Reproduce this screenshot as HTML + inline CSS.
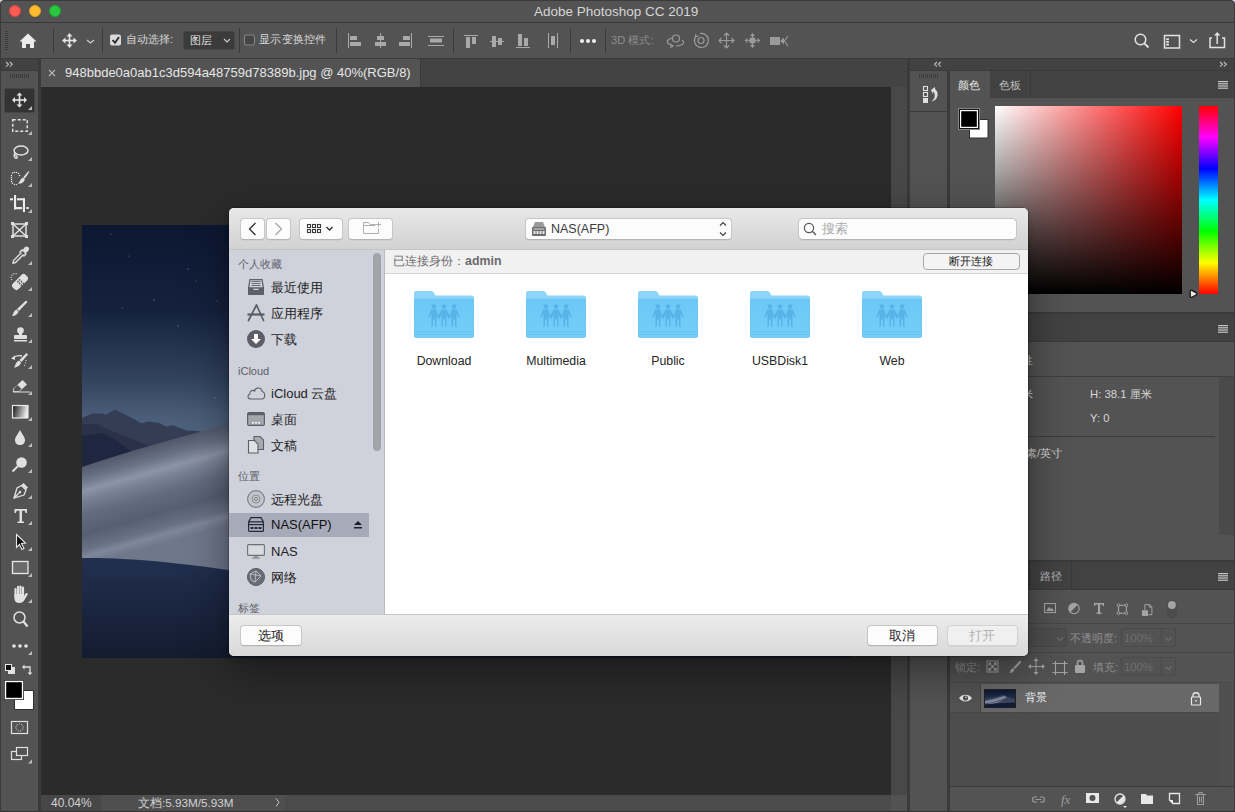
<!DOCTYPE html>
<html><head><meta charset="utf-8">
<style>
*{box-sizing:border-box}
html,body{margin:0;padding:0}
body{width:1235px;height:812px;overflow:hidden;position:relative;background:#2b2b2b;font-family:"Liberation Sans",sans-serif;}
.a{position:absolute}
.t{position:absolute;white-space:nowrap;line-height:1}
svg{position:absolute;overflow:visible}
.btn{background:#fcfcfc;border:1px solid #c6c6c6;border-bottom-color:#b4b4b4;border-radius:4px;box-shadow:0 0.5px 0.5px rgba(0,0,0,0.08)}
.sh{font-size:11px;color:#5d5e66}
.si{font-size:13px;color:#1e1e1e}
</style></head><body>

<!-- TITLE BAR -->
<div class="a" style="left:0;top:0;width:6px;height:6px;background:#d4d6ea"></div>
<div class="a" style="left:1229px;top:0;width:6px;height:6px;background:#d4d6ea"></div>
<div class="a" style="left:0;top:0;width:1235px;height:23px;background:#535353;border:1px solid #3a3a3a;border-bottom-color:#383838;border-radius:4.5px 4.5px 0 0"></div>
<div class="a" style="left:9px;top:5px;width:12px;height:12px;border-radius:50%;background:#fd5a52;border:0.5px solid #e0443e"></div>
<div class="a" style="left:29px;top:5px;width:12px;height:12px;border-radius:50%;background:#febc2e;border:0.5px solid #dea123"></div>
<div class="a" style="left:49px;top:5px;width:12px;height:12px;border-radius:50%;background:#28c840;border:0.5px solid #1aab29"></div>
<div class="t" style="left:534px;top:5px;font-size:13.5px;color:#d6d6d6">Adobe Photoshop CC 2019</div>

<!-- OPTIONS BAR -->
<div class="a" style="left:0;top:23px;width:1235px;height:36px;background:#535353;border-bottom:1px solid #3a3a3a"></div>


<!-- options content -->
<svg style="left:0;top:0" width="1235" height="60">
 <g fill="#3c3c3c">
  <rect x="5" y="31" width="3" height="1"/><rect x="5" y="33" width="3" height="1"/><rect x="5" y="35" width="3" height="1"/><rect x="5" y="37" width="3" height="1"/><rect x="5" y="39" width="3" height="1"/><rect x="5" y="41" width="3" height="1"/><rect x="5" y="43" width="3" height="1"/><rect x="5" y="45" width="3" height="1"/><rect x="5" y="47" width="3" height="1"/><rect x="5" y="49" width="3" height="1"/>
 </g>
 <!-- home -->
 <path d="M28 33.5 L36.5 41.5 L34 41.5 L34 48 L30 48 L30 44 L26 44 L26 48 L22 48 L22 41.5 L19.5 41.5 Z" fill="#ececec"/>
 <g fill="#3a3a3a"><rect x="53" y="28" width="1" height="25"/><rect x="102" y="28" width="1" height="25"/><rect x="239" y="28" width="1" height="25"/><rect x="336" y="28" width="1" height="25"/><rect x="453" y="28" width="1" height="25"/><rect x="570" y="28" width="1" height="25"/><rect x="605" y="28" width="1" height="25"/></g>
 <!-- move -->
 <g fill="#e6e6e6">
  <rect x="68.7" y="35" width="1.6" height="11"/><rect x="64" y="39.7" width="11" height="1.6"/>
  <path d="M69.5 33 L72.5 36.5 L66.5 36.5Z M69.5 48 L72.5 44.5 L66.5 44.5Z M62 40.5 L65.5 37.5 L65.5 43.5Z M77 40.5 L73.5 37.5 L73.5 43.5Z"/>
 </g>
 <path d="M87 40 L90.5 43 L94 40" fill="none" stroke="#cfcfcf" stroke-width="1.2"/>
 <!-- checkbox 1 -->
 <rect x="110" y="34.5" width="11" height="11" rx="2" fill="#dadada"/>
 <path d="M112.5 40 L115 42.7 L119 37" fill="none" stroke="#2a2a2a" stroke-width="1.8"/>
 <!-- dropdown -->
 <rect x="183.5" y="31.5" width="51" height="18" rx="2" fill="#3b3b3b" stroke="#474747"/>
 <path d="M224 39 L227 42 L230 39" fill="none" stroke="#cfcfcf" stroke-width="1.1"/>
 <!-- checkbox 2 -->
 <rect x="244.5" y="35" width="10" height="10" rx="2" fill="#454545" stroke="#8a8a8a" stroke-width="1"/>
 <!-- align icons -->
 <g fill="#a9a9a9">
  <rect x="348" y="33" width="1" height="15"/><rect x="350" y="36" width="7" height="4"/><rect x="350" y="42" width="11" height="4"/>
  <rect x="380" y="33" width="1" height="15"/><rect x="377" y="36" width="7" height="4"/><rect x="375" y="42" width="11" height="4"/>
  <rect x="411" y="33" width="1" height="15"/><rect x="403" y="36" width="7" height="4"/><rect x="399" y="42" width="11" height="4"/>
  <rect x="428" y="36" width="16" height="1"/><rect x="430" y="38.5" width="12" height="4"/><rect x="428" y="45" width="16" height="1"/>
  <rect x="464" y="35" width="14" height="1"/><rect x="466" y="37" width="4" height="11"/><rect x="472" y="37" width="4" height="7"/>
  <rect x="490" y="41" width="14" height="1"/><rect x="492" y="36" width="4" height="11"/><rect x="498" y="38" width="4" height="7"/>
  <rect x="516" y="47" width="14" height="1"/><rect x="518" y="34" width="4" height="12"/><rect x="524" y="38" width="4" height="8"/>
  <rect x="548" y="33" width="1" height="15"/><rect x="551" y="36" width="4" height="9"/><rect x="557" y="33" width="1" height="15"/>
 </g>
 <!-- dots -->
 <g fill="#f0f0f0"><circle cx="582" cy="41" r="2"/><circle cx="588" cy="41" r="2"/><circle cx="594" cy="41" r="2"/></g>
 <!-- 3D icons -->
 <g fill="none" stroke="#9a9a9a" stroke-width="1.2">
  <circle cx="676" cy="38.5" r="3.5"/><path d="M672.5 38 C667 39 666 42 669 44 L673 46 M676 46 C682 46 686 43 682 40"/><path d="M670 44 L673 46 L670 47.5" />
  <circle cx="701" cy="40.5" r="3"/><path d="M696 36 A7 7 0 1 0 700 33.6"/><path d="M695.5 34 L696 36.5 L698.5 36"/>
  <path d="M726.5 33 L726.5 48 M719 40.5 L734 40.5 M724 35.5 L726.5 33 L729 35.5 M724 45.5 L726.5 48 L729 45.5 M721.5 38 L719 40.5 L721.5 43 M731.5 38 L734 40.5 L731.5 43"/>
 </g>
 <g fill="#9a9a9a">
  <circle cx="752.5" cy="40.5" r="3.2"/><path d="M752.5 33 L755 36 L750 36Z M752.5 48 L755 45 L750 45Z M744.5 40.5 L747.5 38 L747.5 43Z M760.5 40.5 L757.5 38 L757.5 43Z"/>
  <rect x="748" y="40" width="9" height="1"/><rect x="752" y="36" width="1" height="9"/>
  <rect x="770" y="37" width="10" height="8"/><path d="M780 41 L784 37.5 L784 44.5Z"/>
 </g>
 <path d="M788 36 L784.5 41 L788 46" fill="none" stroke="#9a9a9a" stroke-width="1.1"/>
 <!-- right icons -->
 <g fill="none" stroke="#e2e2e2" stroke-width="1.5">
  <circle cx="1140.5" cy="39.5" r="5.3"/><path d="M1144.5 43.5 L1148.5 47.5" stroke-width="1.8"/>
  <rect x="1164.5" y="35.5" width="15" height="12.5"/>
  <path d="M1190 39.5 L1193.5 42.5 L1197 39.5" stroke-width="1.1"/>
  <path d="M1212 38 L1210 38 L1210 47.5 L1224.5 47.5 L1224.5 38 L1222 38"/><path d="M1217.2 44 L1217.2 34"/>
 </g>
 <g fill="#e2e2e2"><rect x="1166.2" y="38.3" width="2.7" height="1.8"/><rect x="1166.2" y="41" width="2.7" height="1.8"/><rect x="1166.2" y="43.7" width="2.7" height="1.8"/><path d="M1217.2 32 L1220.5 35.5 L1214 35.5Z"/></g>
</svg>
<div class="t" style="left:126px;top:34px;font-size:11.2px;color:#d8d8d8">自动选择:</div>
<div class="t" style="left:190px;top:35px;font-size:11.2px;color:#e0e0e0">图层</div>
<div class="t" style="left:259px;top:34px;font-size:11.2px;letter-spacing:0.3px;color:#d8d8d8">显示变换控件</div>
<div class="t" style="left:611px;top:35px;font-size:11.2px;color:#8c8c8c">3D 模式:</div>

<!-- LEFT TOOLBAR -->
<div class="a" style="left:0;top:23px;width:1px;height:789px;background:#3a3a3a;z-index:5"></div>
<div class="a" style="left:1234px;top:23px;width:1px;height:789px;background:#3a3a3a;z-index:5"></div>
<div class="a" style="left:0;top:59px;width:38px;height:12px;background:#424242;border-bottom:1px solid #3a3a3a"></div>
<div class="a" style="left:0;top:71px;width:38px;height:741px;background:#535353;border-left:1px solid #3f3f3f"></div>
<div class="a" style="left:38px;top:59px;width:3px;height:753px;background:#3a3a3a"></div>

<!-- DOC TAB BAR -->
<div class="a" style="left:41px;top:59px;width:866px;height:28px;background:#434343"></div>
<div class="a" style="left:41px;top:59px;width:380px;height:28px;background:#535353;border-right:1px solid #3a3a3a"></div>


<!-- toolbar content -->



<svg style="left:0;top:0" width="40" height="812">
 <g fill="#3a3a3a"><rect x="10" y="74" width="1" height="4"/><rect x="12" y="74" width="1" height="4"/><rect x="14" y="74" width="1" height="4"/><rect x="16" y="74" width="1" height="4"/><rect x="18" y="74" width="1" height="4"/><rect x="20" y="74" width="1" height="4"/><rect x="22" y="74" width="1" height="4"/><rect x="24" y="74" width="1" height="4"/><rect x="26" y="74" width="1" height="4"/><rect x="28" y="74" width="1" height="4"/></g>
 <rect x="4.5" y="88.5" width="30" height="24" rx="2" fill="#333333" stroke="#454545"/>
 <g fill="#e4e4e4">
  <rect x="18.7" y="94" width="1.6" height="12"/><rect x="13.5" y="99.2" width="12" height="1.6"/>
  <path d="M19.5 92.5 L22.5 95.5 L16.5 95.5Z M19.5 107.5 L22.5 104.5 L16.5 104.5Z M12 100 L15 97 L15 103Z M27 100 L24 97 L24 103Z"/>
 </g>
 <g fill="#bdbdbd">
  <path d="M32 106 L32 110 L28 110Z"/><path d="M32 131 L32 135 L28 135Z"/><path d="M32 157 L32 161 L28 161Z"/><path d="M32 183 L32 187 L28 187Z"/><path d="M32 209 L32 213 L28 213Z"/>
  <path d="M32 261 L32 265 L28 265Z"/><path d="M32 287 L32 291 L28 291Z"/><path d="M32 313 L32 317 L28 317Z"/><path d="M32 339 L32 343 L28 343Z"/><path d="M32 365 L32 369 L28 369Z"/><path d="M32 391 L32 395 L28 395Z"/><path d="M32 417 L32 421 L28 421Z"/><path d="M32 443 L32 447 L28 447Z"/><path d="M32 469 L32 473 L28 473Z"/><path d="M32 495 L32 499 L28 499Z"/><path d="M32 521 L32 525 L28 525Z"/><path d="M32 547 L32 551 L28 551Z"/><path d="M32 573 L32 577 L28 577Z"/><path d="M32 599 L32 603 L28 603Z"/><path d="M32 651 L32 655 L28 655Z"/><path d="M32 759.5 L32 763.5 L28 763.5Z"/>
 </g>
 <g fill="none" stroke="#e0e0e0" stroke-width="1.5">
  <rect x="12.75" y="119.75" width="14.5" height="11.5" stroke-dasharray="3 2"/>
  <ellipse cx="21" cy="150.5" rx="7" ry="4.5"/><path d="M15 153 C13 156 15 159 17 158 C18 157 16 155 15 155"/>
  
  
  <rect x="13" y="224" width="13" height="12"/><path d="M13 224 L26 236 M26 224 L13 236"/>
 </g>
 <g fill="#e0e0e0">
  <g fill="#f0f0f0"><circle cx="12.5" cy="173" r="0.7"/><circle cx="14.4" cy="172.4" r="0.7"/><circle cx="16.4" cy="172.4" r="0.7"/><circle cx="18.4" cy="173.4" r="0.7"/><circle cx="19.5" cy="175.5" r="0.7"/><circle cx="11.5" cy="175.5" r="0.7"/><circle cx="11.5" cy="177.5" r="0.7"/><circle cx="11.5" cy="179.5" r="0.7"/><circle cx="11.5" cy="181.5" r="0.7"/><circle cx="12.5" cy="183.2" r="0.7"/><circle cx="14.4" cy="184.6" r="0.7"/><circle cx="16.4" cy="184.6" r="0.7"/></g>
  <path d="M28.5 171 L29.2 172 L25 178.5 L23.2 177.3 Z M22.8 177.6 L24.8 178.9 C24.5 182 21.5 183.8 18 183.8 C19.5 182.5 20 179 22.8 177.6 Z" fill="#e0e0e0"/>
  <g fill="#eeeeee"><rect x="10" y="198.3" width="3" height="2"/><rect x="14" y="195" width="2.1" height="14.4"/><rect x="14" y="207" width="8" height="2.2"/><rect x="22.9" y="198.3" width="2.1" height="13.8"/><rect x="17" y="198.3" width="8" height="2"/><rect x="26.3" y="207" width="2.4" height="2"/></g>
  <rect x="11" y="222" width="3" height="3"/><rect x="25" y="222" width="3" height="3"/><rect x="11" y="235" width="3" height="3"/><rect x="25" y="235" width="3" height="3"/>
 </g>
 <!-- eyedropper -->
 <path d="M25 248 C27 246 29 248 28 250 L25 253 L26 254 L24 256 L23 255 L15.5 262.5 L13 263 L13.5 260.5 L21 253 L20 252 L22 250 L23 251 Z" fill="none" stroke="#e0e0e0" stroke-width="1.4"/>
 <path d="M25 248 C27 246 29 248 28 250 L25 253 L23 251 Z" fill="#e0e0e0"/>
 <!-- healing -->
 <g transform="rotate(-45 20 282)"><rect x="11" y="278" width="18" height="8" rx="3" fill="#e0e0e0"/><g fill="#535353"><rect x="18" y="279.5" width="1.5" height="1.5"/><rect x="20.5" y="279.5" width="1.5" height="1.5"/><rect x="18" y="282" width="1.5" height="1.5"/><rect x="20.5" y="282" width="1.5" height="1.5"/><rect x="18" y="284.5" width="1.5" height="1.5"/><rect x="20.5" y="284.5" width="1.5" height="1.5"/></g></g>
 <path d="M12 280 A4 4 0 0 1 17 274" fill="none" stroke="#e0e0e0" stroke-width="1.2" stroke-dasharray="1 1.3"/>
 <!-- brush -->
 <path d="M26 300.5 L27.5 302 L19 311 L17 309 Z M16.5 309.5 L18.5 311.5 C18 314 15 316 12 316 C13.5 314.5 13 311 16.5 309.5Z" fill="#e0e0e0"/>
 <!-- stamp -->
 <g fill="#e0e0e0"><circle cx="20.5" cy="330.5" r="3.3"/><rect x="19" y="332" width="3" height="3.5"/><rect x="14" y="335" width="13" height="4" rx="1"/><rect x="14" y="340" width="13" height="1.5"/></g>
 <!-- history brush -->
 <path d="M26.5 353 L28 354.5 L21.5 362 L19.5 360 Z M19 360.5 L21 362.5 C20.5 365 17.5 367.5 14 367.5 C15.5 366 15.5 362 19 360.5Z" fill="#e0e0e0"/>
 <path d="M22 356 C18 355 15 356 13 358" fill="none" stroke="#e0e0e0" stroke-width="1.4"/><path d="M11 358.5 L15 355.5 L15 360Z" fill="#e0e0e0"/>
 <g fill="#e0e0e0"><rect x="25.5" y="360" width="1" height="1"/><rect x="25" y="362.5" width="1" height="1"/><rect x="24" y="365" width="1" height="1"/></g>
 <!-- eraser -->
 <path d="M22.5 380 L27 384.5 L19 392 L13 392 L13 389 Z" fill="#e0e0e0"/><path d="M17.5 385 L21.5 389 L19 391.2 L14 391.2 L13.8 389 Z" fill="#535353"/><rect x="13" y="391.5" width="17" height="1" fill="#e0e0e0"/>
 <!-- gradient -->
 <defs><linearGradient id="gr" x1="0" y1="0" x2="1" y2="0.2"><stop offset="0" stop-color="#111"/><stop offset="1" stop-color="#eee"/></linearGradient></defs>
 <rect x="12.5" y="405.5" width="15.5" height="12.5" fill="url(#gr)" stroke="#e8e8e8" stroke-width="1.2"/>
 <!-- drop -->
 <path d="M20 430 C22 434 25 437 25 440 C25 443 23 445 20 445 C17 445 15 443 15 440 C15 437 18 434 20 430Z" fill="#e0e0e0"/>
 <!-- dodge -->
 <circle cx="21.5" cy="462.5" r="5.3" fill="#e0e0e0"/><path d="M18 466 L12.5 471.5" stroke="#e0e0e0" stroke-width="2" fill="none"/>
 <!-- pen -->
 <path d="M23.5 483 L28 487.5 L26 489.5 L21.5 485 Z" fill="#e0e0e0"/>
 <path d="M21.5 485.5 L26 490 L24 495 L14 498 L17 488 Z M14 498 L19.5 492.5" fill="none" stroke="#e0e0e0" stroke-width="1.3"/><circle cx="20" cy="492" r="1.2" fill="#e0e0e0"/>
 <!-- type -->
 <path d="M14.5 509 L27 509 L27 513 L25.5 513 L25 510.7 L22 510.7 L22 521.5 L24 521.5 L24 523 L17.5 523 L17.5 521.5 L19.5 521.5 L19.5 510.7 L16.5 510.7 L16 513 L14.5 513 Z" fill="#e0e0e0"/>
 <!-- path select -->
 <path d="M16.5 534.5 L25.5 543 L21.5 543.5 L24 548.5 L22 549.5 L19.5 544.5 L16.5 547.5 Z" fill="#111" stroke="#e8e8e8" stroke-width="1.1"/>
 <!-- rect -->
 <rect x="12.5" y="561.5" width="15.5" height="12" fill="#6b6b6b" stroke="#e8e8e8" stroke-width="1.3"/>
 <!-- hand -->
 <g fill="#e2e2e2">
  <rect x="14.4" y="588" width="2.2" height="9" rx="1.1"/>
  <rect x="16.9" y="585.8" width="2.2" height="9" rx="1.1"/>
  <rect x="19.4" y="585.4" width="2.2" height="9" rx="1.1"/>
  <rect x="21.9" y="586.6" width="2.2" height="9" rx="1.1"/>
  <path d="M14.4 594 L24.1 594 L24.1 596 L25.6 593.6 C26.4 592.4 28.3 593.2 27.6 594.6 L24 600.8 C23 602.3 21.3 603 19.2 603 C16.2 603 14.4 601 14.4 598.4 Z"/>
 </g>
 <!-- zoom -->
 <circle cx="19.5" cy="617.5" r="5.5" fill="none" stroke="#e0e0e0" stroke-width="1.5"/><path d="M23.5 621.5 L27.5 626.5" stroke="#e0e0e0" stroke-width="2.2"/>
 <!-- dots -->
 <g fill="#e6e6e6"><circle cx="14" cy="646" r="1.8"/><circle cx="20" cy="646" r="1.8"/><circle cx="26" cy="646" r="1.8"/></g>
 <!-- default colors -->
 <rect x="8" y="667" width="7" height="7" fill="#e0e0e0"/><rect x="5.5" y="664.5" width="6" height="6" fill="#111" stroke="#e8e8e8"/>
 <path d="M23 667 L30 667 L30 673" fill="none" stroke="#e0e0e0" stroke-width="1.3"/><path d="M22 667 L24.5 664.5 L24.5 669.5Z M30 675 L27.5 672.5 L32.5 672.5Z" fill="#e0e0e0"/>
 <!-- swatches -->
 <rect x="14.5" y="690.5" width="19" height="19" fill="#fff" stroke="#333"/>
 <rect x="4.5" y="680.5" width="19" height="19" fill="#000" stroke="#2d2d2d"/><rect x="5.5" y="681.5" width="17" height="17" fill="none" stroke="#fff" stroke-width="1.4"/>
 <!-- quick mask -->
 <rect x="11.5" y="721.5" width="16" height="12" fill="none" stroke="#e0e0e0" stroke-width="1.2"/><circle cx="19.5" cy="727.5" r="3.6" fill="none" stroke="#e0e0e0" stroke-width="1" stroke-dasharray="1 1"/>
 <!-- screen mode -->
 <rect x="11.5" y="751.5" width="10" height="8" fill="#535353" stroke="#e0e0e0" stroke-width="1.2"/><rect x="16.5" y="747.5" width="11" height="8" fill="#535353" stroke="#e0e0e0" stroke-width="1.2"/>
</svg>

<!-- doc tab text -->
<svg style="left:0;top:0" width="60" height="90"><path d="M49 70 L55 76 M55 70 L49 76" stroke="#b8b8b8" stroke-width="1.1"/></svg>
<div class="t" style="left:65px;top:66px;font-size:13px;color:#e6e6e6">948bbde0a0ab1c3d594a48759d78389b.jpg @ 40%(RGB/8)</div>

<!-- CANVAS -->
<div class="a" style="left:41px;top:87px;width:850px;height:708px;background:#2b2b2b"></div>

<!-- CANVAS IMAGE -->
<svg style="left:82px;top:225px" width="769" height="433">
 <defs>
  <linearGradient id="sky" x1="0" y1="0" x2="0" y2="1"><stop offset="0" stop-color="#0c1731"/><stop offset="0.2" stop-color="#15223e"/><stop offset="0.36" stop-color="#33445f"/><stop offset="0.44" stop-color="#4a5d78"/><stop offset="0.5" stop-color="#536681"/><stop offset="1" stop-color="#536681"/></linearGradient>
  <linearGradient id="dune1" gradientUnits="userSpaceOnUse" x1="0" y1="242" x2="26" y2="334">
   <stop offset="0" stop-color="#545b6f"/><stop offset="0.12" stop-color="#687084"/><stop offset="0.25" stop-color="#8c94a7"/><stop offset="0.33" stop-color="#7a8296"/><stop offset="0.48" stop-color="#646c80"/><stop offset="0.68" stop-color="#565e72"/><stop offset="0.84" stop-color="#697185"/><stop offset="0.91" stop-color="#7f879b"/><stop offset="1" stop-color="#6f778b"/>
  </linearGradient>
  <linearGradient id="dune2" x1="0" y1="0" x2="0" y2="1"><stop offset="0" stop-color="#223050"/><stop offset="1" stop-color="#131b2f"/></linearGradient>
  <linearGradient id="mtn" x1="0" y1="0" x2="0" y2="1"><stop offset="0" stop-color="#3a425a"/><stop offset="1" stop-color="#2a3148"/></linearGradient>
 </defs>
 <rect width="769" height="433" fill="url(#sky)"/>
 <path d="M0 192.8 L10.3 188.5 L20.2 188.5 L23.8 189.7 L33.1 184.5 L41.1 188.5 L50.9 193.4 L59.5 198.3 L65.7 196.5 L76.8 197.7 L84.2 201.4 L90.3 200.2 L96.5 202.6 L105.1 205.7 L113.7 205.7 L121 207 L160 230 L0 260 Z" fill="#353d54"/>
 <path d="M0 199.5 L15 199 L22.6 203 L35 208 L50 214 L70 222 L95 230 L120 236 L0 262 Z" fill="#2a3148"/>
 <path d="M0 211 L20 207.9 L35 216 L50.9 227.6 L60 232 L0 262 Z" fill="#1f2740"/>
 <path d="M0 242 C50 225 100 212 147 199 L769 20 L769 433 L0 433 Z" fill="url(#dune1)"/>
 <path d="M0 333 C40 332 100 338 147 345 C300 360 500 380 769 400 L769 433 L0 433 Z" fill="url(#dune2)"/>
 <g fill="#9aa6c0" opacity="0.6"><circle cx="29" cy="9" r="0.6"/><circle cx="47" cy="31" r="0.6"/><circle cx="106" cy="44" r="0.7"/><circle cx="114" cy="56" r="0.6"/><circle cx="72" cy="75" r="0.7"/><circle cx="40" cy="83" r="0.6"/><circle cx="96" cy="101" r="0.7"/><circle cx="135" cy="76" r="0.6"/><circle cx="133" cy="173" r="0.7"/></g>
</svg>

<div class="a" style="left:891px;top:87px;width:16px;height:708px;background:#484848"></div>
<!-- status bar -->
<div class="a" style="left:41px;top:795px;width:866px;height:16px;background:#4b4b4b"></div>


<div class="a" style="left:41px;top:795px;width:60px;height:16px;background:#474747"></div>
<div class="a" style="left:101px;top:795px;width:184px;height:16px;background:#4f4f4f"></div>
<div class="t" style="left:51px;top:797px;font-size:12px;color:#d2d2d2">40.04%</div>
<div class="t" style="left:138px;top:797px;font-size:11.7px;color:#d2d2d2">文档:5.93M/5.93M</div>
<svg style="left:270px;top:795px" width="16" height="16"><path d="M276 3.5 L279 7.5 L276 11.5" transform="translate(-270 0)" fill="none" stroke="#c8c8c8" stroke-width="1"/></svg>
<div class="a" style="left:891px;top:795px;width:16px;height:16px;background:#525252"></div>

<!-- RIGHT COLUMNS -->
<div class="a" style="left:907px;top:59px;width:3px;height:753px;background:#3a3a3a"></div>
<div class="a" style="left:910px;top:59px;width:325px;height:12px;background:#424242;border-bottom:1px solid #3a3a3a"></div>
<div class="a" style="left:910px;top:71px;width:37px;height:741px;background:#535353"></div>
<div class="a" style="left:910px;top:111px;width:37px;height:1px;background:#3a3a3a"></div>
<div class="a" style="left:947px;top:71px;width:3px;height:741px;background:#3a3a3a"></div>
<div class="a" style="left:950px;top:71px;width:284px;height:741px;background:#535353"></div>
<div class="a" style="left:1234px;top:59px;width:1px;height:753px;background:#333"></div>
<div class="a" style="left:0;top:811px;width:1235px;height:1px;background:#333"></div>



<!-- PANELS -->
<!-- history icon col -->
<svg style="left:909px;top:71px" width="40" height="45">
 <g fill="#3c3c3c" transform="translate(3 0)"><rect x="7" y="3" width="1" height="4"/><rect x="9" y="3" width="1" height="4"/><rect x="11" y="3" width="1" height="4"/><rect x="13" y="3" width="1" height="4"/><rect x="15" y="3" width="1" height="4"/><rect x="17" y="3" width="1" height="4"/><rect x="19" y="3" width="1" height="4"/><rect x="21" y="3" width="1" height="4"/><rect x="23" y="3" width="1" height="4"/><rect x="25" y="3" width="1" height="4"/></g>
 <g fill="none" stroke="#e0e0e0" stroke-width="1.1"><rect x="14.5" y="15.5" width="4" height="4"/><rect x="14.5" y="21.5" width="4" height="4"/></g>
 <rect x="14" y="27" width="5" height="5" fill="#e0e0e0"/>
 <path d="M22 19 L26 16 L26.2 18.5 C29 20 29.5 25 27 28 C25.8 29.3 24 30.2 22.5 30.5 C25 28.5 26.5 25.5 25.5 22.5 C25.2 21.5 24.8 21 24.2 20.5 L24 23 Z" fill="#e0e0e0"/>
</svg>

<!-- color panel -->
<div class="a" style="left:950px;top:71px;width:284px;height:27px;background:#424242"></div>
<div class="a" style="left:950px;top:71px;width:40px;height:27px;background:#535353"></div>
<div class="a" style="left:1030px;top:71px;width:1px;height:27px;background:#393939"></div>
<div class="t" style="left:958px;top:80px;font-size:11.3px;color:#e4e4e4">颜色</div>
<div class="t" style="left:999px;top:80px;font-size:11.3px;color:#bcbcbc">色板</div>
<svg style="left:1217px;top:80px" width="12" height="10"><g fill="#c6c6c6"><rect x="1" y="1" width="10" height="1.2"/><rect x="1" y="3.2" width="10" height="1.2"/><rect x="1" y="5.4" width="10" height="1.2"/><rect x="1" y="7.6" width="10" height="1.2"/></g></svg>
<svg style="left:958px;top:108px" width="32" height="32">
 <rect x="11.5" y="11.5" width="18.5" height="18.5" fill="#fff" stroke="#2e2e2e"/>
 <rect x="0.5" y="0.5" width="21" height="21" fill="#000" stroke="#858585"/>
 <rect x="1.5" y="1.5" width="19" height="19" fill="none" stroke="#111"/>
 <rect x="2.6" y="2.6" width="16.8" height="16.8" fill="none" stroke="#fff" stroke-width="1.2"/>
</svg>
<div class="a" style="left:995px;top:106px;width:187px;height:188px;background:linear-gradient(to bottom,rgba(0,0,0,0),#000),linear-gradient(to right,#fff,#f00)"></div>
<div class="a" style="left:1199px;top:106px;width:19px;height:188px;background:linear-gradient(to bottom,#ff0000 0%,#ff00ff 16.7%,#0000ff 33.3%,#00ffff 50%,#00ff00 66.7%,#ffff00 83.3%,#ff0000 100%)"></div>
<svg style="left:1188px;top:288px" width="12" height="12"><path d="M2.2 3.6 Q2.2 1.6 4 2.4 L8.4 4.9 Q9.6 5.8 8.4 6.7 L4 9.2 Q2.2 10 2.2 8 Z" fill="#e8e8e8" stroke="#151515" stroke-width="1.3" stroke-linejoin="round"/></svg>
<div class="a" style="left:950px;top:312px;width:284px;height:2px;background:#3a3a3a"></div>

<!-- properties panel -->
<div class="a" style="left:950px;top:314px;width:284px;height:28px;background:#424242;border-bottom:1px solid #3b3b3b"></div>
<svg style="left:1217px;top:324px" width="12" height="10"><g fill="#c6c6c6"><rect x="1" y="1" width="10" height="1.2"/><rect x="1" y="3.2" width="10" height="1.2"/><rect x="1" y="5.4" width="10" height="1.2"/><rect x="1" y="7.6" width="10" height="1.2"/></g></svg>
<div class="a" style="left:950px;top:376px;width:284px;height:1px;background:#3f3f3f"></div>
<div class="t" style="left:933px;top:355px;width:100px;text-align:right;font-size:11.3px;color:#cfcfcf">文档属性</div>
<div class="a" style="left:1219px;top:377px;width:15px;height:158px;background:#4a4a4a"></div>
<div class="t" style="left:933px;top:389px;width:100px;text-align:right;font-size:11.3px;color:#d6d6d6">W: 50.8 厘米</div>
<div class="t" style="left:1090px;top:389px;font-size:11.3px;color:#d6d6d6">H: 38.1 厘米</div>
<div class="t" style="left:960px;top:412px;font-size:11.3px;color:#d6d6d6">X: 0</div>
<div class="t" style="left:1090px;top:413px;font-size:11.3px;color:#d6d6d6">Y: 0</div>
<div class="a" style="left:958px;top:436px;width:257px;height:1px;background:#3d3d3d"></div>
<div class="t" style="left:960px;top:448px;font-size:11.3px;color:#d6d6d6">分辨率: 72 像素/英寸</div>
<div class="a" style="left:950px;top:560px;width:284px;height:2px;background:#3a3a3a"></div>

<!-- layers panel -->
<div class="a" style="left:950px;top:562px;width:284px;height:28px;background:#424242;border-bottom:1px solid #3b3b3b"></div>
<div class="a" style="left:950px;top:562px;width:40px;height:29px;background:#535353"></div>
<div class="a" style="left:990px;top:562px;width:1px;height:28px;background:#393939"></div>
<div class="a" style="left:1029px;top:562px;width:1px;height:28px;background:#393939"></div>
<div class="a" style="left:1071px;top:562px;width:1px;height:28px;background:#393939"></div>
<div class="t" style="left:1040px;top:571px;font-size:11.3px;color:#bcbcbc">路径</div>
<svg style="left:1217px;top:572px" width="12" height="10"><g fill="#c6c6c6"><rect x="1" y="1" width="10" height="1.2"/><rect x="1" y="3.2" width="10" height="1.2"/><rect x="1" y="5.4" width="10" height="1.2"/><rect x="1" y="7.6" width="10" height="1.2"/></g></svg>
<div class="a" style="left:950px;top:623px;width:284px;height:1px;background:#474747"></div>
<div class="a" style="left:950px;top:652px;width:284px;height:1px;background:#474747"></div>
<div class="a" style="left:950px;top:682px;width:284px;height:1px;background:#474747"></div>
<svg style="left:950px;top:590px" width="284" height="200">
 <g fill="none" stroke="#a4a4a4" stroke-width="1.1">
  <rect x="94.5" y="13.5" width="11" height="9"/>
  <circle cx="124" cy="18.5" r="5.2"/>
  <rect x="168.5" y="15.3" width="7.9" height="7.9"/>
  <rect x="72.5" y="38.5" width="44" height="18" rx="2" stroke="#4a4a4a" fill="#4f4f4f"/>
  <rect x="171.5" y="38.5" width="54" height="18" rx="2" stroke="#4a4a4a"/><path d="M211.5 38.5 L211.5 56.5" stroke="#4a4a4a"/>
  <rect x="171.5" y="67.5" width="54" height="17.5" rx="2" stroke="#4a4a4a"/><path d="M211.5 67.5 L211.5 85" stroke="#4a4a4a"/>
  <path d="M107 47.5 L110 50.5 L113 47.5 M215.5 47.5 L218.5 50.5 L221.5 47.5 M215.5 76.5 L218.5 79.5 L221.5 76.5" stroke="#6e6e6e"/>
 </g>
 <g fill="#a4a4a4">
  <path d="M96 21 L99 17 L101 19 L102 18 L104 21 Z"/>
  <path d="M124 13.3 A5.2 5.2 0 0 0 124 23.7 Z" transform="rotate(45 124 18.5)"/>
  <path d="M144 13 L154 13 L154 16 L153 16 L152.5 14.5 L150 14.5 L150 22.5 L151.5 22.5 L151.5 24 L146.5 24 L146.5 22.5 L148 22.5 L148 14.5 L145.5 14.5 L145 16 L144 16 Z"/>
  
  <rect x="192" y="20.2" width="6" height="5.8"/>
  <circle cx="221.9" cy="15" r="4"/>
 </g>
 <rect x="217.7" y="10.5" width="8.5" height="17.5" rx="4.25" fill="#4c4c4c" stroke="#484848" stroke-width="0.8"/><circle cx="221.9" cy="15" r="4" fill="#a4a4a4"/>
 <g fill="#535353" stroke="#a4a4a4" stroke-width="1"><circle cx="168.5" cy="15.3" r="1.4"/><circle cx="176.4" cy="15.3" r="1.4"/><circle cx="168.5" cy="23.2" r="1.4"/><circle cx="176.4" cy="23.2" r="1.4"/></g>
 <path d="M194.8 20 L194.8 14.6 L199.5 14.6 L201.9 17 L201.9 24.7 L198.2 24.7 M199.3 14.8 L199.3 17.2 L201.7 17.2" fill="none" stroke="#a4a4a4" stroke-width="1"/>
 <!-- lock row icons -->
 <g fill="#a4a4a4">
  <rect x="37" y="71" width="11" height="11" fill="none" stroke="#a4a4a4"/><rect x="38.5" y="72.5" width="2.7" height="2.7"/><rect x="43.9" y="72.5" width="2.7" height="2.7"/><rect x="41.2" y="75.2" width="2.7" height="2.7"/><rect x="38.5" y="77.9" width="2.7" height="2.7"/><rect x="43.9" y="77.9" width="2.7" height="2.7"/>
  <path d="M70 70.5 L71.5 72 L65 79 L63.5 77.5 Z M63 78 L64.5 79.5 C64 81.5 62 83 59.5 83 C60.5 81.5 60.5 79 63 78 Z"/>
  <rect x="85.5" y="69" width="1" height="15"/><rect x="79" y="76" width="15" height="1"/><path d="M86 68 L88.5 71 L83.5 71Z M86 85 L88.5 82 L83.5 82Z M78 76.5 L81 74 L81 79Z M95 76.5 L92 74 L92 79Z"/>
  <path d="M127.5 75 L127.5 73 C127.5 69.5 132.5 69.5 132.5 73 L132.5 75" fill="none" stroke="#a4a4a4" stroke-width="1.5"/><rect x="125" y="75" width="10" height="8" rx="1"/>
 </g>
 <path d="M105.5 73.5 L114.5 73.5 L114.5 82.5 L105.5 82.5 Z M105.5 71 L105.5 73.5 M102.5 73.5 L105.5 73.5 M105.5 82.5 L105.5 85 M102.5 82.5 L105.5 82.5 M114.5 73.5 L117.5 73.5 M114.5 71 L114.5 73.5 M114.5 82.5 L117.5 82.5 M114.5 82.5 L114.5 85" fill="none" stroke="#a4a4a4" stroke-width="1.1"/>
</svg>
<div class="t" style="left:1070px;top:633px;font-size:11.3px;color:#8f8f8f">不透明度:</div>
<div class="t" style="left:1124px;top:633px;font-size:11.3px;color:#6e6e6e">100%</div>
<div class="t" style="left:955px;top:662px;font-size:11.3px;color:#8f8f8f">锁定:</div>
<div class="t" style="left:1093px;top:662px;font-size:11.3px;color:#8f8f8f">填充:</div>
<div class="t" style="left:1124px;top:662px;font-size:11.3px;color:#6e6e6e">100%</div>
<!-- layer row -->
<div class="a" style="left:981px;top:684px;width:238px;height:28px;background:#686868"></div>
<div class="a" style="left:950px;top:684px;width:31px;height:28px;background:#535353;border-right:1px solid #484848"></div>
<div class="a" style="left:950px;top:712px;width:269px;height:1px;background:#484848"></div>
<div class="a" style="left:950px;top:713px;width:269px;height:73px;background:#4d4d4d"></div>
<div class="a" style="left:1219px;top:684px;width:15px;height:102px;background:#4f4f4f"></div>
<svg style="left:950px;top:684px" width="284" height="30">
 <path d="M9 14 C12 9.5 19 9.5 22 14 C19 18.5 12 18.5 9 14Z" fill="#e8e8e8"/><circle cx="15.5" cy="14" r="2.6" fill="#535353"/><circle cx="16" cy="13.3" r="0.8" fill="#e8e8e8"/>
 <path d="M243 13 L243 11 C243 8 249 8 249 11 L249 13" fill="none" stroke="#e8e8e8" stroke-width="1.3"/><rect x="241.5" y="13" width="9" height="8" rx="0.5" fill="none" stroke="#e8e8e8" stroke-width="1.2"/><rect x="245.3" y="16" width="1.4" height="1.8" fill="#e8e8e8"/>
</svg>
<svg style="left:984px;top:689px" width="32" height="19">
 <defs><linearGradient id="ths" x1="0" y1="0" x2="0" y2="1"><stop offset="0" stop-color="#0b1530"/><stop offset="0.5" stop-color="#24334f"/><stop offset="1" stop-color="#101a30"/></linearGradient></defs>
 <rect x="0.5" y="0.5" width="31" height="18" fill="url(#ths)" stroke="#222" stroke-width="1"/>
 <path d="M1 10 L6 9 L12 8 L17 6.5 L20 6 L24 8 L28 9.5 L31 10.5 L31 17 L1 17Z" fill="#3b4660"/>
 <path d="M1 12 L8 10.5 L14 9 L20 7 L23 8.5 L18 10.5 L10 13 L1 14.5Z" fill="#8d97ad" opacity="0.85"/>
 <path d="M3 15 L10 13.5 L16 12 L20 11 L14 13.5 L6 16Z" fill="#9aa3b8" opacity="0.7"/>
 <path d="M1 15.5 C10 14.5 20 14 31 13.5 L31 18.5 L1 18.5Z" fill="#141d34"/>
</svg>
<div class="t" style="left:1025px;top:692px;font-size:11.3px;color:#f0f0f0">背景</div>
<!-- layers footer -->
<div class="a" style="left:950px;top:786px;width:284px;height:1px;background:#3b3b3b"></div>
<svg style="left:1020px;top:788px" width="200" height="24">
 <g fill="none" stroke="#9c9c9c" stroke-width="1.2"><path d="M17 9 L14.5 9 C12 9 12 14 14.5 14 L17 14 M20 9 L22.5 9 C25 9 25 14 22.5 14 L20 14 M15.5 11.5 L21.5 11.5"/></g>
 <text x="41" y="16" font-family="Liberation Serif" font-style="italic" font-size="13" fill="#9c9c9c">fx</text>
 <rect x="66" y="5" width="13" height="10" fill="#e8e8e8"/><circle cx="72.5" cy="10" r="3" fill="#535353"/>
 <circle cx="100" cy="11" r="5" fill="#535353" stroke="#e8e8e8" stroke-width="1.3"/><path d="M96.5 14.5 L103.5 7.5 A5 5 0 0 1 96.5 14.5Z" fill="#e8e8e8"/><path d="M103 18 L107 18 L105 20Z" fill="#e8e8e8"/>
 <path d="M121 6 L126 6 L127 7.5 L133 7.5 L133 16 L121 16 Z" fill="#e8e8e8"/>
 <path d="M149.5 5.5 L159.5 5.5 L159.5 15.5 L153 15.5 L149.5 12Z" fill="none" stroke="#e8e8e8" stroke-width="1.3"/><path d="M149 12 L153 12 L153 16Z" fill="#e8e8e8"/>
 <g fill="none" stroke="#9c9c9c" stroke-width="1.1"><path d="M175 6.5 L186 6.5 M177.5 6.5 L177.5 16.5 L183.5 16.5 L183.5 6.5 M178.5 6.5 L179 4.5 L182 4.5 L182.5 6.5 M179.5 8.5 L179.5 14.5 M181.5 8.5 L181.5 14.5"/></g>
</svg>

<svg style="left:0;top:0" width="1235" height="75"><g fill="none" stroke="#bdbdbd" stroke-width="1.1">
<path d="M6 62 L8.5 64.3 L6 66.6 M9.8 62 L12.3 64.3 L9.8 66.6"/>
<path d="M937 62 L934.5 64.3 L937 66.6 M940.8 62 L938.3 64.3 L940.8 66.6"/>
<path d="M1220 62 L1222.5 64.3 L1220 66.6 M1223.8 62 L1226.3 64.3 L1223.8 66.6"/>
</g></svg>
<!-- DIALOG -->
<div class="a" style="left:229px;top:208px;width:799px;height:448px;border-radius:5px;box-shadow:0 0 0 0.5px rgba(0,0,0,0.35),0 14px 45px rgba(0,0,0,0.42),0 2px 6px rgba(0,0,0,0.2);overflow:hidden;background:#fff">
 <!-- toolbar -->
 <div class="a" style="left:0;top:0;width:799px;height:42px;background:linear-gradient(#e8e8e8,#d2d2d2);border-bottom:1px solid #c4c4c4"></div>
 <div class="a btn" style="left:11px;top:10px;width:25px;height:22px"></div>
 <div class="a btn" style="left:37px;top:10px;width:25px;height:22px"></div>
 <div class="a btn" style="left:70px;top:10px;width:44px;height:22px"></div>
 <div class="a btn" style="left:119px;top:10px;width:45px;height:22px"></div>
 <div class="a btn" style="left:296px;top:10px;width:207px;height:22px"></div>
 <div class="a btn" style="left:569px;top:10px;width:219px;height:22px;border-radius:5px"></div>
 <svg style="left:0;top:0" width="799" height="42">
  <path d="M26.5 15 L20.5 21 L26.5 27" fill="none" stroke="#333" stroke-width="1.4"/>
  <path d="M46.5 15 L52.5 21 L46.5 27" fill="none" stroke="#a8a8a8" stroke-width="1.4"/>
  <g fill="none" stroke="#3a3a3a" stroke-width="1.1"><rect x="78.5" y="16.5" width="3" height="3"/><rect x="83.5" y="16.5" width="3" height="3"/><rect x="88.5" y="16.5" width="3" height="3"/><rect x="78.5" y="21.5" width="3" height="3"/><rect x="83.5" y="21.5" width="3" height="3"/><rect x="88.5" y="21.5" width="3" height="3"/></g>
  <path d="M97.5 19 L100.5 22 L103.5 19" fill="none" stroke="#333" stroke-width="1.4"/>
  <path d="M134.5 14.5 L139.5 14.5 L141 16.5 L148 16.5 M134.5 14.5 L134.5 25.5 L149.5 25.5 L149.5 20.5 M134.5 17.5 L146 17.5" fill="none" stroke="#b0b0b0" stroke-width="1"/>
  <path d="M149.5 14 L149.5 19 M147 16.5 L152 16.5" stroke="#b0b0b0" stroke-width="1"/>
  <!-- nas icon -->
  <g transform="translate(303,14)"><path d="M3 0 L11 0 L13 5 L1 5Z" fill="#9a9a9a"/><rect x="0" y="5" width="14" height="9" rx="1" fill="#6f6f6f"/><rect x="1.5" y="6.5" width="11" height="1" fill="#d8d8d8"/><g fill="#e8e8e8"><rect x="1.5" y="9" width="2" height="3"/><rect x="4.5" y="9" width="2" height="3"/><rect x="7.5" y="9" width="2" height="3"/><rect x="10.5" y="9" width="2" height="3"/></g></g>
  <path d="M491 17.5 L494 14.5 L497 17.5 M491 24.5 L494 27.5 L497 24.5" fill="none" stroke="#444" stroke-width="1.2"/>
  <circle cx="580" cy="20" r="4.6" fill="none" stroke="#555" stroke-width="1.2"/><path d="M583.3 23.3 L587 27" stroke="#555" stroke-width="1.3"/>
 </svg>
 <div class="t" style="left:322px;top:15px;font-size:12.5px;color:#3a3a3a">NAS(AFP)</div>
 <div class="t" style="left:593px;top:14px;font-size:13px;color:#a8a8a8">搜索</div>

 <!-- sidebar -->
 <div class="a" style="left:0;top:42px;width:156px;height:364px;background:#cfd1db;border-right:1px solid #b9bac0"></div>
 <div class="a" style="left:144px;top:45px;width:8px;height:198px;border-radius:4px;background:#a3a4aa"></div>
 <div class="a" style="left:0;top:305px;width:140px;height:24px;background:#a7aab8"></div>
 <div class="t sh" style="left:9px;top:51px">个人收藏</div>
 <div class="t si" style="left:42px;top:73px">最近使用</div>
 <div class="t si" style="left:42px;top:99px">应用程序</div>
 <div class="t si" style="left:42px;top:125px">下载</div>
 <div class="t sh" style="left:9px;top:158px">iCloud</div>
 <div class="t si" style="left:42px;top:179px">iCloud 云盘</div>
 <div class="t si" style="left:42px;top:205px">桌面</div>
 <div class="t si" style="left:42px;top:231px">文稿</div>
 <div class="t sh" style="left:9px;top:263px">位置</div>
 <div class="t si" style="left:42px;top:285px">远程光盘</div>
 <div class="t si" style="left:42px;top:310px;color:#111">NAS(AFP)</div>
 <div class="t si" style="left:42px;top:337px">NAS</div>
 <div class="t si" style="left:42px;top:363px">网络</div>
 <div class="t sh" style="left:9px;top:395px">标签</div>
 <svg style="left:0;top:42px" width="156" height="364">
  <!-- recents -->
  <g transform="translate(19,29)"><path d="M2 0.6 L14 0.6 L15.4 9 L0.6 9Z" fill="none" stroke="#5e5f66" stroke-width="1.3"/><path d="M3.5 2.5 L12.5 2.5 M3.5 4.5 L12.5 4.5 M3.5 6.5 L12.5 6.5" stroke="#5e5f66" stroke-width="0.9"/><path d="M0 9 L5 9 L5.5 11 L10.5 11 L11 9 L16 9 L16 15 C16 16 15.5 16 15 16 L1 16 C0.5 16 0 16 0 15Z" fill="#5e5f66"/></g>
  <!-- apps -->
  <g transform="translate(18,54)" fill="none" stroke="#5a5b63" stroke-width="1.7" stroke-linecap="round"><path d="M9.5 1 L1.5 16.5 M9.5 1 L16.5 16.5"/><path d="M0.5 10.5 L17.5 10.5" stroke-width="2.2" stroke-linecap="butt"/></g>
  <!-- download -->
  <g transform="translate(18,80)"><circle cx="9" cy="9" r="9" fill="#5c5d65"/><path d="M7 4 L11 4 L11 9 L14 9 L9 14 L4 9 L7 9Z" fill="#fff"/></g>
  <!-- cloud -->
  <path d="M22 357 Z" />
  <g transform="translate(18,136)"><path d="M4 13 C0.5 13 0 9 3 8 C2.5 5 5.5 3.5 7.5 5 C8.5 1 14.5 1 15 5.5 C18.5 6 18.5 13 15 13Z" fill="none" stroke="#5e5f66" stroke-width="1.1"/></g>
  <!-- desktop -->
  <g transform="translate(18,162)"><rect x="0.6" y="0.6" width="16.8" height="12.8" rx="1.5" fill="#a4a6ad" stroke="#5e5f66" stroke-width="1.2"/><rect x="1" y="1" width="16" height="2.2" fill="#5e5f66"/><g fill="#fff"><rect x="5" y="10" width="1.6" height="1.6"/><rect x="8.2" y="10" width="1.6" height="1.6"/><rect x="11.4" y="10" width="1.6" height="1.6"/></g></g>
  <!-- docs -->
  <g transform="translate(19,186)" stroke="#5e5f66" stroke-width="1.1"><path d="M6 0.5 L12 0.5 L15.5 4 L15.5 13.5 L6 13.5Z" fill="#a9abb2"/><path d="M0.5 4.5 L6.5 4.5 L10 8 L10 17 L0.5 17Z" fill="#e0e1e6"/></g>
  <!-- disc -->
  <g transform="translate(18,240)"><circle cx="9" cy="9" r="8.4" fill="#c4c5cb" stroke="#7b7c83" stroke-width="1.1"/><circle cx="9" cy="9" r="4" fill="none" stroke="#8b8c92" stroke-width="1"/><circle cx="9" cy="9" r="1.6" fill="none" stroke="#7b7c83" stroke-width="0.9"/></g>
  <!-- nas afp -->
  <g transform="translate(19,267)"><path d="M3 0.6 L13 0.6 L15.4 5 L0.6 5Z" fill="none" stroke="#262836" stroke-width="1.2"/><rect x="0.6" y="5" width="14.8" height="9.4" rx="1" fill="#a9acba" stroke="#262836" stroke-width="1.2"/><rect x="0.6" y="7" width="14.8" height="1.2" fill="#262836"/><g fill="#262836"><rect x="2.5" y="10" width="3" height="2"/><rect x="6.5" y="10" width="3" height="2"/><rect x="10.5" y="10" width="3" height="2"/></g></g>
  <path d="M129 271 L133 275 L125 275Z M125 277 L133 277 L133 278.5 L125 278.5Z" fill="#1e1f28"/>
  <!-- nas monitor -->
  <g transform="translate(18,294)"><rect x="0.6" y="0.6" width="16.8" height="10.8" rx="1" fill="#d9dae0" stroke="#6e6f76" stroke-width="1.1"/><rect x="7" y="11.5" width="4" height="2" fill="#8a8b92"/><rect x="5" y="13.5" width="8" height="1.2" fill="#8a8b92"/></g>
  <!-- network -->
  <g transform="translate(18,318)"><circle cx="9" cy="9" r="8.5" fill="#6b6c74" stroke="#56575f" stroke-width="1"/><path d="M3 6 L9 3 L14 8 L8 14 L4 12 Z M9 3 L8 14 M3 6 L14 8" fill="none" stroke="#c9cad0" stroke-width="0.8"/></g>
 </svg>

 <!-- info bar -->
 <div class="a" style="left:156px;top:42px;width:643px;height:24px;background:#f1f1f1;border-bottom:1px solid #d3d3d3"></div>
 <div class="t" style="left:164px;top:47px;font-size:12.4px;color:#6b6b6b">已连接身份：<b>admin</b></div>
 <div class="a" style="left:694px;top:45px;width:97px;height:17px;background:#f4f4f4;border:1px solid #a9a9a9;border-radius:4px"></div>
 <div class="t" style="left:720px;top:48px;font-size:11.2px;color:#222">断开连接</div>

 <!-- folders -->
 <svg style="left:156px;top:66px" width="643" height="340">
  <defs>
   <linearGradient id="fg" x1="0" y1="0" x2="0" y2="1"><stop offset="0" stop-color="#6cc8f7"/><stop offset="1" stop-color="#74cdf9"/></linearGradient>
   <g id="fold">
    <path d="M0 3 C0 1 1 0.5 3 0.5 L17 0.5 C18.5 0.5 19 1 20 2.5 L21.5 5 L57 5 C59 5 60 6 60 8 L60 45 C60 46.5 59 47.5 57.5 47.5 L2.5 47.5 C1 47.5 0 46.5 0 45 Z" fill="#8fd4fa"/>
    <path d="M0 10 C0 8.5 1 8 2.5 8 L57.5 8 C59 8 60 8.5 60 10 L60 45 C60 46.5 59 47.5 57.5 47.5 L2.5 47.5 C1 47.5 0 46.5 0 45 Z" fill="url(#fg)"/>
    <rect x="0" y="41" width="60" height="0.8" fill="#5ab6e8" opacity="0.6"/><rect x="0" y="43.5" width="60" height="0.8" fill="#5ab6e8" opacity="0.5"/>
    <g fill="#58b3e7" transform="translate(0 -2)"><circle cx="20" cy="18" r="2.3"/><circle cx="30" cy="18" r="2.3"/><circle cx="40" cy="18" r="2.3"/>
     <path d="M17.5 21 L22.5 21 L24 27 L26.5 23 L27.5 21 L32.5 21 L33.5 23 L36 27 L37.5 21 L42.5 21 L46 28 L44.8 28.8 L42.5 25 L42.5 39 L41 38 L41 31 L39 31 L39 38 L37.5 38 L37.5 27 L35 30.5 L32.5 27 L32.5 38 L31 38 L31 31 L29 31 L29 38 L27.5 38 L27.5 27 L25 30.5 L22.5 27 L22.5 38 L21 38 L21 31 L19 31 L19 38 L17.5 38 L17.5 25 L15.2 28.8 L14 28 Z"/></g>
   </g>
  </defs>
  <use href="#fold" x="29" y="16.5"/><use href="#fold" x="141" y="16.5"/><use href="#fold" x="253" y="16.5"/><use href="#fold" x="365" y="16.5"/><use href="#fold" x="477" y="16.5"/>
</svg>

 <div class="a" style="left:156px;top:66px;width:643px;height:340px"><div class="t" style="left:-1px;top:81px;width:120px;text-align:center;font-size:12.3px;color:#262626">Download</div><div class="t" style="left:111px;top:81px;width:120px;text-align:center;font-size:12.3px;color:#262626">Multimedia</div><div class="t" style="left:223px;top:81px;width:120px;text-align:center;font-size:12.3px;color:#262626">Public</div><div class="t" style="left:335px;top:81px;width:120px;text-align:center;font-size:12.3px;color:#262626">USBDisk1</div><div class="t" style="left:447px;top:81px;width:120px;text-align:center;font-size:12.3px;color:#262626">Web</div></div>
 <!-- footer -->
 <div class="a" style="left:0;top:406px;width:799px;height:42px;background:linear-gradient(#ececec,#d9d9d9);border-top:1px solid #c7c7c7"></div>
 <div class="a btn" style="left:11px;top:417px;width:62px;height:21px"></div>
 <div class="t" style="left:29px;top:421px;font-size:13px;color:#222">选项</div>
 <div class="a btn" style="left:638px;top:417px;width:71px;height:21px"></div>
 <div class="t" style="left:660px;top:421px;font-size:13px;color:#222">取消</div>
 <div class="a btn" style="left:718px;top:417px;width:71px;height:21px;background:#f0f0f0;border-color:#d2d2d2"></div>
 <div class="t" style="left:740px;top:421px;font-size:13px;color:#b0b0b0">打开</div>
</div>

</body></html>
